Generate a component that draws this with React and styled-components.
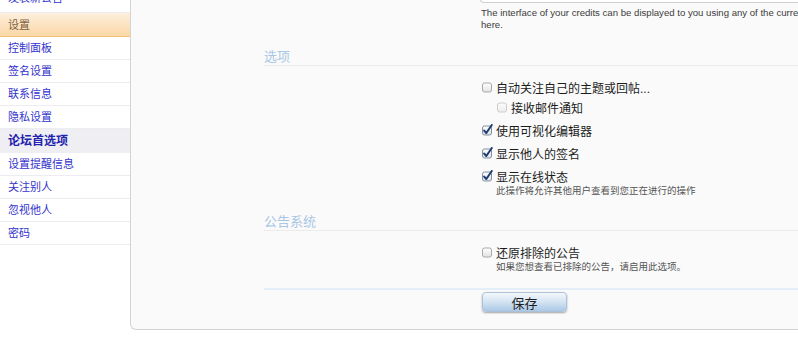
import React from 'react';
import styled, { createGlobalStyle } from 'styled-components';

const GlobalStyle = createGlobalStyle`
  html, body {
    margin: 0;
    padding: 0;
    background: #fff;
    overflow: hidden;
  }
  body {
    font-family: "Liberation Sans", "Noto Sans CJK SC", sans-serif;
  }
`;

// page is scrolled a little, so the whole layout starts above the viewport
const Page = styled.div`
  display: flex;
  align-items: flex-start;
  width: 900px;
  margin-top: -10px;
`;

const Sidebar = styled.nav`
  width: 130px;
  flex-shrink: 0;
  background: #fff;
`;

const NavItem = styled.a`
  display: block;
  height: 22px;
  line-height: ${({ $lead }) => ($lead ? '17px' : '22px')};
  padding-left: 8px;
  border-bottom: 1px solid #ededf1;
  font-size: 11px;
  color: #3333cc;
  text-decoration: none;
`;

const NavHeader = styled.div`
  padding-left: 8px;
  ${({ $tone }) => $tone === 'active' ? `
    height: 23px;
    line-height: 24px;
    font-size: 11px;
    color: #7d6142;
    background: linear-gradient(#fdefdd, #fbd7a6);
    border-bottom: 1px solid #f2bf7c;
  ` : `
    height: 24px;
    line-height: 24px;
    font-size: 12px;
    font-weight: bold;
    color: #2323ae;
    background: #efeff3;
  `}
`;

const Panel = styled.main`
  flex: 1;
  background: #fafafa;
  border-left: 1px solid #d4d4d4;
  border-bottom: 1px solid #d4d4d4;
  border-bottom-left-radius: 6px;
  padding: 0 0 17px 133px;
`;

const SelectStub = styled.div`
  margin-left: 216px;
  width: 380px;
  height: 12px;
  border: 1px solid #cfcfcf;
  border-top: none;
  border-bottom-left-radius: 4px;
  background: #fff;
`;

const CreditsNote = styled.p`
  margin: 4px 0 1px 217px;
  font-size: 9.6px;
  line-height: 12px;
  color: #3c3c3c;
  white-space: nowrap;
`;

const Section = styled.section`
  margin-top: 17px;
`;

const SectionTitle = styled.h3`
  margin: 0;
  padding: 1px 0 0;
  border-bottom: 1px solid #ebebeb;
  font-size: 13px;
  line-height: 16px;
  font-weight: normal;
  color: #a9c7e5;
`;

const OptionList = styled.div`
  padding: 12px 0 0 218px;
`;

const Option = styled.div`
  &:not(:last-child) {
    margin-bottom: 5px;
  }
`;

const OptionRow = styled.label`
  display: flex;
  align-items: center;
  gap: 3px;
  height: 18px;
  margin-left: ${({ $nested }) => ($nested ? '15px' : '0')};
  margin-top: ${({ $nested }) => ($nested ? '2px' : '0')};
  font-size: 12px;
  color: #1c1c1c;
`;

const Hint = styled.div`
  padding-left: 14px;
  font-size: 9.5px;
  line-height: 11px;
  color: #555;
  white-space: nowrap;
`;

const Footer = styled.div`
  margin-top: 16px;
  border-top: 2px solid #e4eef9;
  padding: 2px 0 0 218px;
`;

const SaveButton = styled.button`
  width: 85px;
  height: 20px;
  padding: 0;
  border: 1px solid #adc2d8;
  border-radius: 4px;
  background: linear-gradient(#f3f8fc, #d3e3f2 50%, #aac8e6);
  box-shadow: 0 1px 2px rgba(0, 0, 0, 0.35);
  font-family: inherit;
  font-size: 13px;
  color: #1e1e1e;
`;

const BoxWrap = styled.span`
  display: inline-flex;
  width: 11px;
  height: 12px;
  opacity: ${({ $dim }) => ($dim ? 0.55 : 1)};
`;

function CheckBox({ checked, dim }) {
  return (
    <BoxWrap $dim={dim}>
      <svg width="11" height="12" viewBox="0 0 11 12">
        <defs>
          <linearGradient id="cbg" x1="0" y1="0" x2="0" y2="1">
            <stop offset="0" stopColor="#ffffff" />
            <stop offset="1" stopColor="#e2e2e2" />
          </linearGradient>
        </defs>
        <rect x="0.5" y="2" width="9" height="9" rx="2" fill="url(#cbg)" stroke={checked ? '#7f8fa6' : '#a8a8a8'} />
        {checked && (
          <path d="M2.2 6.6 L4.3 9 L9.8 1" fill="none" stroke="#1f3c70" strokeWidth="2" strokeLinecap="round" strokeLinejoin="round" />
        )}
      </svg>
    </BoxWrap>
  );
}

const settingsLinks = ['控制面板', '签名设置', '联系信息', '隐私设置'];
const forumLinks = ['设置提醒信息', '关注别人', '忽视他人', '密码'];

export default function App() {
  return (
    <>
      <GlobalStyle />
      <Page>
        <Sidebar>
          <NavItem $lead href="#">发表新公告</NavItem>
          <NavHeader $tone="active">设置</NavHeader>
          {settingsLinks.map((l) => <NavItem key={l} href="#">{l}</NavItem>)}
          <NavHeader>论坛首选项</NavHeader>
          {forumLinks.map((l) => <NavItem key={l} href="#">{l}</NavItem>)}
        </Sidebar>

        <Panel>
          <SelectStub />
          <CreditsNote>
            The interface of your credits can be displayed to you using any of the currencies listed
            <br />
            here.
          </CreditsNote>

          <Section>
            <SectionTitle>选项</SectionTitle>
            <OptionList>
              <Option>
                <OptionRow><CheckBox />自动关注自己的主题或回帖...</OptionRow>
                <OptionRow $nested><CheckBox dim />接收邮件通知</OptionRow>
              </Option>
              <Option>
                <OptionRow><CheckBox checked />使用可视化编辑器</OptionRow>
              </Option>
              <Option>
                <OptionRow><CheckBox checked />显示他人的签名</OptionRow>
              </Option>
              <Option>
                <OptionRow><CheckBox checked />显示在线状态</OptionRow>
                <Hint>此操作将允许其他用户查看到您正在进行的操作</Hint>
              </Option>
            </OptionList>
          </Section>

          <Section>
            <SectionTitle>公告系统</SectionTitle>
            <OptionList>
              <Option>
                <OptionRow><CheckBox />还原排除的公告</OptionRow>
                <Hint>如果您想查看已排除的公告，请启用此选项。</Hint>
              </Option>
            </OptionList>
          </Section>

          <Footer>
            <SaveButton type="button">保存</SaveButton>
          </Footer>
        </Panel>
      </Page>
    </>
  );
}
